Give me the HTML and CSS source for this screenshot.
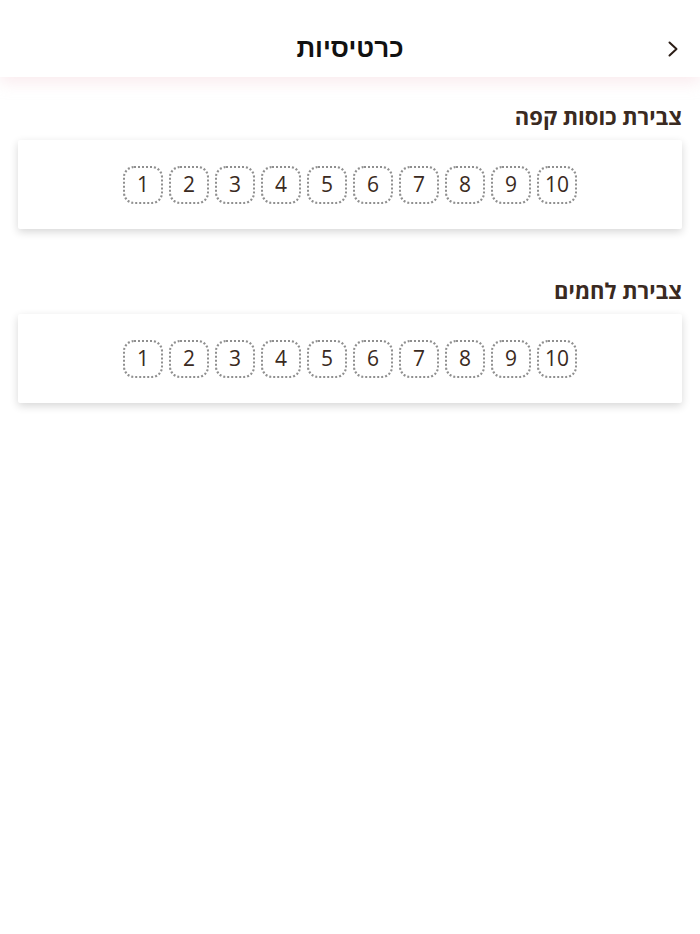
FILE: index.html
```html
<!DOCTYPE html>
<html lang="he" dir="rtl">
<head>
<meta charset="utf-8">
<title>כרטיסיות</title>
<link rel="stylesheet" href="styles.css">
</head>
<body>
<header class="topbar">
  <button class="back" aria-label="חזרה">
    <svg width="10" height="16" viewBox="0 0 10 16"><path d="M1.5 1.5 L8.5 8 L1.5 14.5" fill="none" stroke="#2b1d16" stroke-width="2" stroke-linecap="round" stroke-linejoin="round"/></svg>
  </button>
  <h1 class="title">כרטיסיות</h1>
</header>

<main class="content">
  <section class="punch">
    <h2 class="punch-title">צבירת כוסות קפה</h2>
    <div class="card">
      <div class="stamps">
        <span class="stamp">1</span><span class="stamp">2</span><span class="stamp">3</span><span class="stamp">4</span><span class="stamp">5</span><span class="stamp">6</span><span class="stamp">7</span><span class="stamp">8</span><span class="stamp">9</span><span class="stamp">10</span>
      </div>
    </div>
  </section>

  <section class="punch">
    <h2 class="punch-title">צבירת לחמים</h2>
    <div class="card">
      <div class="stamps">
        <span class="stamp">1</span><span class="stamp">2</span><span class="stamp">3</span><span class="stamp">4</span><span class="stamp">5</span><span class="stamp">6</span><span class="stamp">7</span><span class="stamp">8</span><span class="stamp">9</span><span class="stamp">10</span>
      </div>
    </div>
  </section>
</main>
</body>
</html>
```

FILE: styles.css
```css
* { box-sizing: border-box; }

html, body {
  margin: 0;
  padding: 0;
  background: #ffffff;
  font-family: "Open Sans", "Liberation Sans", sans-serif;
}

body {
  min-height: 934px;
}

.topbar {
  position: relative;
  height: 77px;
  display: flex;
  align-items: center;
  justify-content: center;
  padding-top: 18px;
  background: #ffffff;
  box-shadow: 0 6px 14px rgba(240, 200, 210, 0.35);
  z-index: 2;
}

.title {
  margin: 0;
  font-family: "Liberation Sans", "Open Sans", sans-serif;
  font-size: 26px;
  font-weight: 700;
  color: #111111;
  line-height: 1;
}

.back {
  position: absolute;
  right: 22px;
  top: 41px;
  width: 10px;
  height: 16px;
  padding: 0;
  border: 0;
  background: none;
  display: flex;
}

.content {
  padding: 0 18px 40px;
}

.punch-title {
  margin: 24px 0 9px;
  font-size: 22px;
  line-height: 30px;
  font-weight: 700;
  color: #3a2a21;
  text-align: right;
}

.punch + .punch .punch-title {
  margin-top: 46px;
}

.card {
  height: 89px;
  background: #ffffff;
  border-radius: 2px;
  box-shadow: 0 3px 8px rgba(0, 0, 0, 0.16);
  display: flex;
  align-items: center;
  justify-content: center;
}

.stamps {
  direction: ltr;
  display: flex;
  gap: 6px;
}

.stamp {
  width: 40px;
  height: 38px;
  border: 2px dotted #8f8f8f;
  border-radius: 11px;
  display: flex;
  align-items: center;
  justify-content: center;
  font-family: "Open Sans", sans-serif;
  font-size: 21px;
  color: #3a2a21;
  line-height: 1;
}
```
